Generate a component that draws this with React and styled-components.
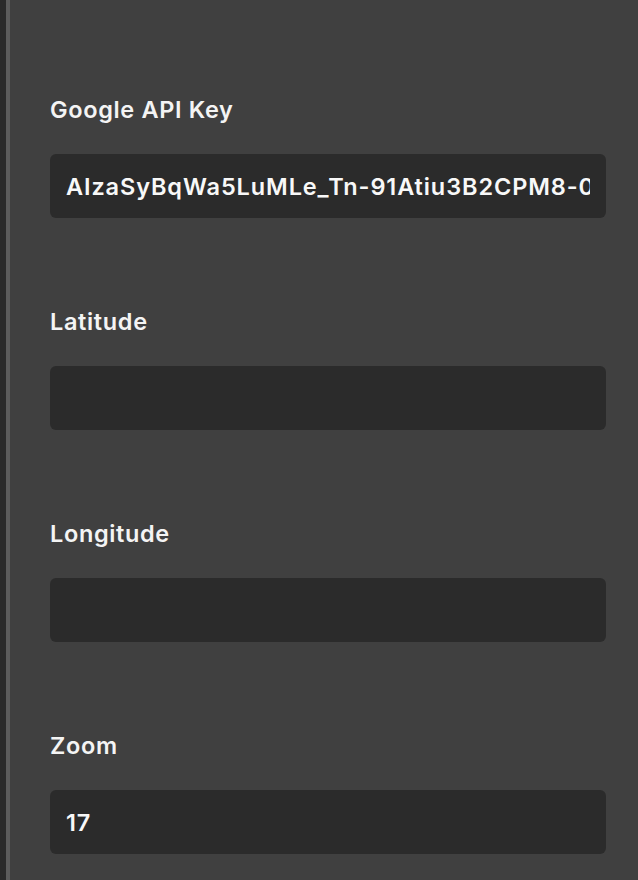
import React from "react";
import styled, { createGlobalStyle } from "styled-components";

const GlobalStyle = createGlobalStyle`
  html, body {
    margin: 0;
    padding: 0;
    background: #404040;
  }
  body {
    font-family: Inter, "Noto Sans", sans-serif;
  }
`;

const Shell = styled.div`
  display: flex;
  min-height: 880px;
  background: #2a2a2a;
  padding-left: 6px;
`;

const Panel = styled.div`
  flex: 1;
  background: #404040;
  border-left: 4px solid #5c5c5c;
  padding: 90px 32px 0 40px;
  display: flex;
  flex-direction: column;
  gap: 84px;
`;

const Field = styled.div`
  display: flex;
  flex-direction: column;
  gap: 24px;
`;

const Label = styled.label`
  color: #f4f4f4;
  font-size: 23.5px;
  font-weight: 600;
  letter-spacing: 0.65px;
  line-height: 40px;
`;

const Input = styled.input`
  box-sizing: border-box;
  width: 100%;
  height: 64px;
  border: none;
  outline: none;
  border-radius: 6px;
  background: #2b2b2b;
  color: #f8f8f8;
  font-family: Inter, "Noto Sans", sans-serif;
  font-size: 23.5px;
  font-weight: 600;
  letter-spacing: 0.9px;
  padding: 0 16px;
`;

const fields = [
  { label: "Google API Key", value: "AIzaSyBqWa5LuMLe_Tn-91Atiu3B2CPM8-0ZsXnQk" },
  { label: "Latitude", value: "" },
  { label: "Longitude", value: "" },
  { label: "Zoom", value: "17" },
];

const App = () => {
  return (
    <>
      <GlobalStyle />
      <Shell>
        <Panel>
          {fields.map((f) => (
            <Field key={f.label}>
              <Label>{f.label}</Label>
              <Input defaultValue={f.value} />
            </Field>
          ))}
        </Panel>
      </Shell>
    </>
  );
};

export default App;
